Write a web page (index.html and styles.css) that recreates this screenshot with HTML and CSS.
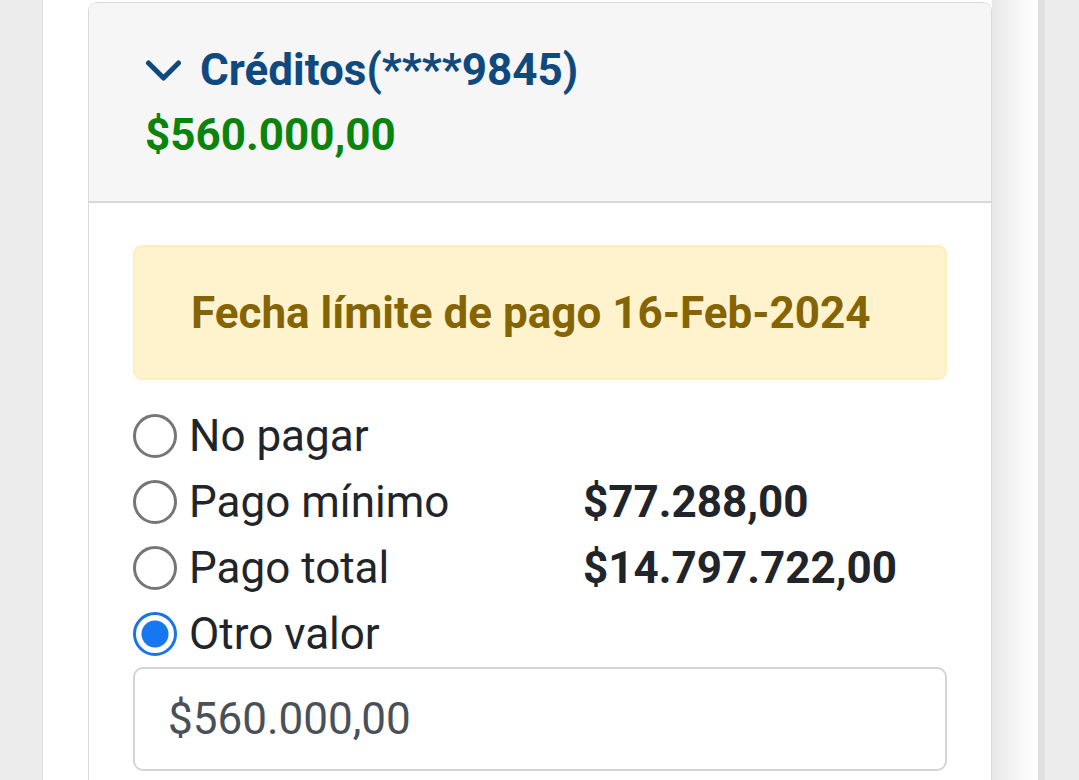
FILE: index.html
```html
<!DOCTYPE html>
<html lang="es">
<head>
<meta charset="utf-8">
<title>Créditos</title>
<link rel="stylesheet" href="styles.css">
</head>
<body>
<div class="page">
  <div class="card">
    <div class="card-header">
      <div class="title-row">
        <svg class="chevron" width="37" height="24" viewBox="0 0 37 24" aria-hidden="true">
          <path d="M3.5 4 L18.5 19 L33.5 4" fill="none" stroke="#0f4a7f" stroke-width="5" stroke-linecap="round" stroke-linejoin="round"/>
        </svg>
        <span class="title">Créditos(****9845)</span>
      </div>
      <div class="amount">$560.000,00</div>
    </div>
    <div class="card-body">
      <div class="alert">Fecha límite de pago 16-Feb-2024</div>
      <div class="options">
        <label class="option">
          <span class="radio"></span>
          <span class="opt-label">No pagar</span>
        </label>
        <label class="option">
          <span class="radio"></span>
          <span class="opt-label">Pago mínimo</span>
          <span class="opt-value">$77.288,00</span>
        </label>
        <label class="option">
          <span class="radio"></span>
          <span class="opt-label">Pago total</span>
          <span class="opt-value">$14.797.722,00</span>
        </label>
        <label class="option">
          <span class="radio checked"></span>
          <span class="opt-label">Otro valor</span>
        </label>
      </div>
      <div class="input">$560.000,00</div>
    </div>
  </div>
</div>
</body>
</html>
```

FILE: styles.css
```css
html, body {
  margin: 0;
  padding: 0;
}
body {
  background: #ececec;
  font-family: Roboto, "Liberation Sans", Arial, sans-serif;
  height: 780px;
  overflow: hidden;
}
.page {
  margin-left: 42px;
  width: 1003px;
  height: 780px;
  box-sizing: border-box;
  border-left: 1px solid #dcdcdc;
  border-right: 7px solid #e0e0e0;
  background: linear-gradient(to right, #fff 0, #fff 949px, #e8e8e8 949px, #fbfbfb 985px, #fff 995px);
  padding: 2px 0 0 45px;
}
.card {
  width: 904px;
  box-sizing: border-box;
  border: 1px solid #dadada;
  border-bottom: none;
  border-radius: 9px 9px 0 0;
  overflow: hidden;
  background: #fff;
  height: 800px;
}
.card-header {
  background: #f6f6f6;
  height: 200px;
  box-sizing: border-box;
  border-bottom: 2px solid #d8d8d8;
  padding: 40px 0 0 56px;
}
.title-row {
  display: flex;
  align-items: center;
  gap: 18px;
}
.chevron {
  display: block;
  margin-top: 2px;
}
.title {
  font-size: 44px;
  font-weight: 700;
  color: #0f4a7f;
  line-height: 54px;
}
.amount {
  font-size: 44px;
  font-weight: 700;
  color: #0a840d;
  line-height: 54px;
  margin-top: 11px;
}
.card-body {
  padding: 42px 44px 0 44px;
}
.alert {
  height: 135px;
  box-sizing: border-box;
  background: #fff3cd;
  border: 2px solid #ffeeba;
  border-radius: 9px;
  color: #856404;
  font-size: 44px;
  font-weight: 700;
  display: flex;
  align-items: center;
  padding-left: 56px;
}
.options {
  margin-top: 23px;
}
.option {
  display: flex;
  align-items: center;
  height: 66px;
}
.radio {
  width: 44px;
  height: 44px;
  box-sizing: border-box;
  border: 3px solid #767676;
  border-radius: 50%;
  flex: none;
  margin-right: 12px;
  background: #fff;
}
.radio.checked {
  border-color: #1a73e8;
  background: radial-gradient(circle, #1677f0 0, #1677f0 13px, #fff 14px);
}
.opt-label {
  font-size: 44px;
  color: #212529;
  width: 394px;
  flex: none;
}
.opt-value {
  font-size: 44px;
  font-weight: 700;
  color: #212529;
}
.input {
  height: 104px;
  box-sizing: border-box;
  border: 2px solid #d4d4d4;
  border-radius: 10px;
  display: flex;
  align-items: center;
  padding-left: 33px;
  font-size: 44px;
  color: #495057;
}
```
